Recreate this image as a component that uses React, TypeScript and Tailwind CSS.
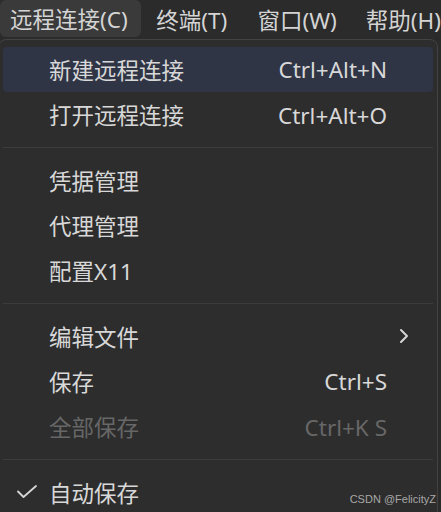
import React from "react";

type Item = {
  label: string;
  shortcut?: string;
  disabled?: boolean;
  active?: boolean;
  submenu?: boolean;
  checked?: boolean;
};

const sections: Item[][] = [
  [
    { label: "新建远程连接", shortcut: "Ctrl+Alt+N", active: true },
    { label: "打开远程连接", shortcut: "Ctrl+Alt+O" },
  ],
  [{ label: "凭据管理" }, { label: "代理管理" }, { label: "配置X11" }],
  [
    { label: "编辑文件", submenu: true },
    { label: "保存", shortcut: "Ctrl+S" },
    { label: "全部保存", shortcut: "Ctrl+K S", disabled: true },
  ],
  [{ label: "自动保存", checked: true }],
];

const MenuRow = ({ item }: { item: Item }) => {
  return (
    <div
      className={`flex items-center h-[45.33px] rounded-[4px] ${
        item.active ? "bg-[#2f3545]" : ""
      } ${item.disabled ? "text-[#676767]" : "text-[#d8d8d8]"}`}
    >
      <div className="w-[46px] h-full flex items-center pl-[14px]">
        {item.checked && (
          <svg width="20" height="14" viewBox="0 0 20 14" fill="none">
            <polyline
              points="1,6.5 6.5,12 19,1"
              stroke="#d6d6d6"
              strokeWidth="1.8"
              strokeLinecap="round"
              strokeLinejoin="round"
            />
          </svg>
        )}
      </div>
      <div className="flex-1 pt-[3px]">{item.label}</div>
      {item.shortcut && <div className="pt-[2px]">{item.shortcut}</div>}
      <div className="w-[46px] h-full flex items-center pl-[12px]">
        {item.submenu && (
          <svg width="10" height="16" viewBox="0 0 10 16" fill="none">
            <polyline
              points="2,2 8,8 2,14"
              stroke="#d6d6d6"
              strokeWidth="2"
              strokeLinecap="round"
              strokeLinejoin="round"
            />
          </svg>
        )}
      </div>
    </div>
  );
};

export default function App() {
  return (
    <div
      className="relative w-[441px] h-[512px] overflow-hidden bg-[#2b2b2b] text-[22.5px] leading-none"
      style={{ fontFamily: '"Noto Sans", "Noto Sans CJK SC", sans-serif' }}
    >
      <div className="flex h-[39px] text-[#d4d4d4] whitespace-nowrap">
        <div className="flex items-center w-[142px] h-[37px] pl-[10px] pt-[3px] rounded-[6px] bg-[#3a3a3a]">
          远程连接(C)
        </div>
        <div className="flex items-center ml-[15px] pt-[3px]">终端(T)</div>
        <div className="flex items-center ml-[30px] pt-[3px]">窗口(W)</div>
        <div className="flex items-center ml-[29px] pt-[3px]">帮助(H)</div>
      </div>

      <div className="ml-[-2px] w-[440px] h-[480px] px-[4px] pt-[7px] border border-[#434343] rounded-[8px] bg-[#2d2d2d]">
        {sections.map((section, i) => (
          <div key={i}>
            {i > 0 && (
              <div className="h-[20px] flex items-center">
                <div className="h-px w-full bg-[#3c3c3c]" />
              </div>
            )}
            {section.map((item) => (
              <MenuRow key={item.label} item={item} />
            ))}
          </div>
        ))}
      </div>

      <div
        className="absolute right-[5px] bottom-[7px] text-[11px] text-[#a8a8a8]"
        style={{ fontFamily: '"Liberation Sans", Arial, sans-serif' }}
      >
        CSDN @FelicityZ
      </div>
    </div>
  );
}
